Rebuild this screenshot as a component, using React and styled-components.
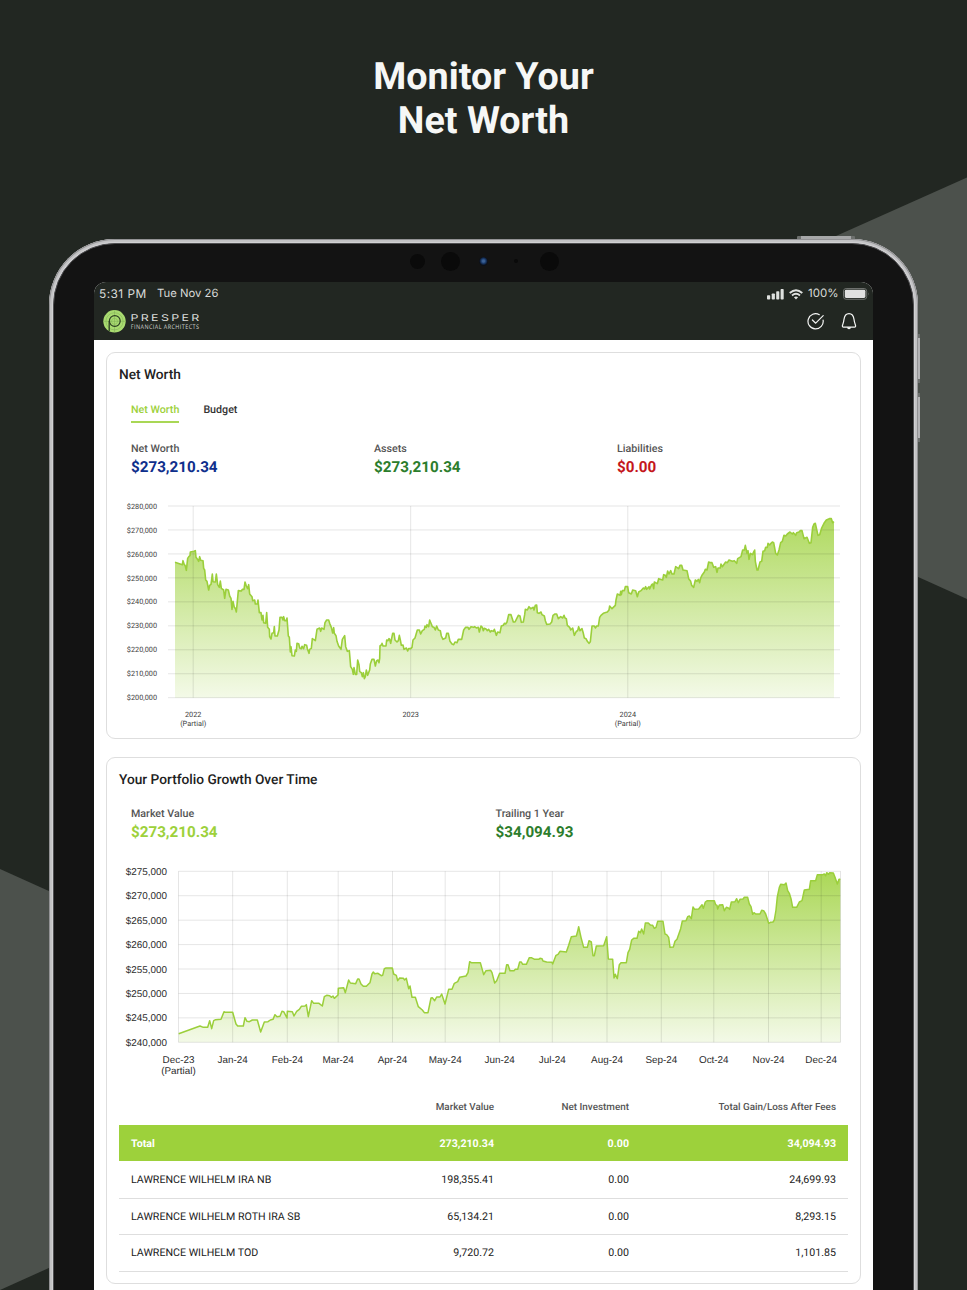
import styled, { createGlobalStyle, css } from 'styled-components';

const GREEN = '#9dd13b';

// Traces are sampled on a grid three times finer than the chart's own pixels.
const netWorthTrace = [
  {
    dx: 0,
    points:
      '195,217 217,224 219,212 222,222 226,228 229,241 233,205 237,199 240,197 241,186 252,184 256,182 258,202 264,210 266,214 269,200 272,211 279,212 281,235 284,240 287,270 291,274 293,285 296,300 299,286 303,283 307,252 309,275 316,276 319,252 323,284 328,292 331,273 334,295 341,300 344,325 348,298 355,300 359,318 363,325 366,358 369,334 373,352 376,355 379,366 385,302 394,303 397,298 402,298 405,276 409,288 413,296 416,284 419,312 426,320 428,332 434,330 436,342 442,342 444,330 448,368 453,368 456,390 459,376 461,398 467,400 470,368 473,412 478,418 479,440 483,447 486,430 491,428 493,410 495,438 502,438 507,420 510,382 516,382 519,390 521,380 524,392 529,392 531,384 535,438 538,442 541,486 543,470 546,497 553,498 556,480 559,484 561,460 566,461 569,474 574,476 576,469 581,476 584,464 590,466 592,476 597,490 599,478 604,475 607,446 616,452 621,418 629,414 632,424 635,414 642,418 645,398 650,390 656,390 659,400 664,412 668,429 671,413 673,430 678,437 681,454 686,468 693,478 697,448 702,440 704,437 707,470 712,484 718,482 722,530 727,538 730,553 732,533 736,553 740,553 743,510 747,524 749,545 754,548 757,560 760,548 763,566 766,560 769,540 773,556',
  },
  {
    dx: 750,
    points:
      '27,545 29,540 31,522 36,508 42,508 46,528 50,512 54,510 57,518 59,505 60,468 65,464 66,460 69,468 78,468 80,450 84,452 87,446 89,448 92,460 98,430 102,430 105,450 111,456 115,452 118,436 121,450 124,466 129,465 132,478 139,474 143,483 146,476 152,476 156,472 159,450 165,444 172,420 178,420 182,432 187,422 193,418 195,408 199,412 201,404 206,410 209,390 212,398 214,402 217,410 222,412 226,420 230,408 235,420 241,422 244,438 249,448 257,444 260,430 265,430 270,454 276,462 281,464 285,456 291,458 295,448 305,448 311,420 317,412 324,412 327,418 333,410 341,412 344,410 349,414 355,412 358,426 363,408 367,412 370,422 373,415 379,418 382,422 386,418 391,426 394,422 400,424 403,418 409,436 413,426 420,428 424,408 430,406 433,400 437,402 441,396 446,374 453,374 460,396 465,396 469,388 475,376 480,378 484,397 490,396 494,374 496,358 502,360 507,350 512,356 520,352 522,360 526,346 530,345 532,368 537,370 543,366 546,374 553,378 556,392 560,403 570,402 575,396 579,376 585,372 590,372 595,386 602,380 608,384 612,376 615,384 619,386 622,406 629,412 632,420 638,414 643,436 649,424 653,422 656,410 660,422 666,416 670,430 673,444 678,446 682,454 687,460 691,455 696,408 703,408 706,414 710,408 715,408 719,382',
  },
  {
    dx: 1470,
    points:
      '3,376 10,370 22,366 27,360 29,348 36,356 46,346 48,330 52,312 60,316 62,304 64,314 67,302 73,302 76,290 83,290 86,308 94,312 98,300 107,302 112,320 116,306 123,302 130,294 134,297 137,290 140,298 147,290 149,297 155,284 158,282 161,296 163,276 172,281 176,266 188,270 191,254 196,256 199,262 203,243 207,252 212,242 216,252 222,252 227,230 236,236 240,226 245,226 249,240 261,242 266,266 272,274 275,286 281,292 286,270 291,274 295,268 299,278 302,264 307,254 313,246 316,238 321,240 326,216 332,218 336,218 341,232 347,230 351,247 354,234 361,234 363,222 367,230 377,216 382,218 387,210 397,214 403,212 410,220 413,206 423,200 428,180 433,180 436,166 441,190 444,182 447,208 451,190 458,194 460,188 464,180 466,214 471,240 474,240 480,216 485,214 489,184 494,182 497,172 502,172 504,160 509,165 513,160 517,156 521,158 527,190 532,195 537,180 542,158 547,154 552,136 557,138 562,132 570,126 577,132 580,128 587,136 590,128 597,126 601,122 606,122 612,146 621,142 628,160 633,158 638,112 642,102 646,100 650,118 654,136 659,134 665,114 672,100 679,90 688,86 694,86 698,98 702,95',
  },
];

const portfolioTrace = [
  {
    dx: 0,
    points:
      '206,521 270,498 280,502 293,502 299,482 305,506 311,482 317,479 333,478 342,455 347,457 368,457 378,492 383,498 400,498 405,473 411,484 418,485 427,480 442,480 452,516 463,486 474,485 481,480 489,478 495,464 501,470 510,469 516,454 521,455 531,474 532,454 547,455 552,468 560,454 568,448 574,439 585,438 589,434 595,470 605,422 611,430 627,430 637,438 643,410 650,406 659,407 664,412 669,408 673,415 684,405 685,385 701,383 706,398 716,360 721,369 737,371 743,357 747,357 753,372 760,379 769,379 778,370',
  },
  {
    dx: 750,
    points:
      '30,368 36,342 40,336 44,341 54,340 64,347 68,346 73,326 78,324 97,324 101,342 109,346 113,362 119,354 130,355 134,360 139,355 146,386 150,378 156,412 166,412 175,440 187,450 193,458 204,458 213,414 217,413 224,422 230,411 240,411 245,402 255,432 266,388 276,388 283,370 293,365 299,352 318,348 324,338 329,305 334,308 361,308 371,344 378,332 392,331 396,338 404,369 410,362 419,340 435,340 440,314 444,314 450,332 462,332 466,328 473,328 479,306 484,306 488,313 499,313 508,293 514,293 524,298 536,298 540,295 546,296 549,303 560,306 576,307 578,312 588,286 594,283 600,274 619,276 626,256 634,230 649,228 653,214 656,200 663,232 671,262 682,262 687,242 694,246 699,287 703,287 709,258 731,257',
  },
  {
    dx: 1470,
    points:
      '20,230 25,297 38,298 42,354 46,343 52,356 58,314 63,308 79,308 84,278 89,268 95,240 101,235 111,235 116,214 121,218 125,207 131,222 136,189 145,189 151,195 158,196 163,205 168,202 173,184 189,184 195,222 200,224 206,232 210,262 220,261 225,244 231,238 242,206 247,183 258,182 263,170 268,168 274,176 279,141 284,148 296,147 306,134 310,145 316,126 322,122 343,122 347,134 351,136 353,147 358,135 368,134 373,152 379,142 385,144 389,148 394,126 405,125 410,116 415,128 420,118 429,117 433,112 443,112 448,132 453,140 458,163 462,158 467,162 480,162 485,151 491,152 497,162 506,190 511,187 519,186 523,180 528,150 532,110 538,82 542,73 553,74 558,69 563,92 568,100 573,116 578,142 590,142 598,126 606,122 613,90 628,88 632,62 647,62 652,44 668,44 673,42 677,47 680,38 686,43 689,38 700,39 705,52 712,72 717,58 721,58',
  },
];

const netWorthAxis = {
  values: ['$280,000', '$270,000', '$260,000', '$250,000', '$240,000', '$230,000', '$220,000', '$210,000', '$200,000'],
  dates: [
    { x: 74.2, label: '2022', partial: true },
    { x: 291.7, label: '2023' },
    { x: 508.8, label: '2024', partial: true },
  ],
};

const portfolioAxis = {
  values: ['$275,000', '$270,000', '$265,000', '$260,000', '$255,000', '$250,000', '$245,000', '$240,000'],
  dates: [
    { x: 59.5, label: 'Dec-23', partial: true },
    { x: 113.7, label: 'Jan-24' },
    { x: 168.3, label: 'Feb-24' },
    { x: 219.2, label: 'Mar-24' },
    { x: 273.5, label: 'Apr-24' },
    { x: 326.2, label: 'May-24' },
    { x: 380.7, label: 'Jun-24' },
    { x: 433.3, label: 'Jul-24' },
    { x: 488, label: 'Aug-24' },
    { x: 542.3, label: 'Sep-24' },
    { x: 594.8, label: 'Oct-24' },
    { x: 649.5, label: 'Nov-24' },
    { x: 702.2, label: 'Dec-24' },
  ],
};

const accounts = [
  { name: 'LAWRENCE WILHELM IRA NB', value: '198,355.41', net: '0.00', gain: '24,699.93' },
  { name: 'LAWRENCE WILHELM ROTH IRA SB', value: '65,134.21', net: '0.00', gain: '8,293.15' },
  { name: 'LAWRENCE WILHELM TOD', value: '9,720.72', net: '0.00', gain: '1,101.85' },
];

const toPoints = (segments, offsetY) =>
  segments.flatMap(({ dx, points }) =>
    points.split(' ').map((pair) => {
      const [x, y] = pair.split(',').map(Number);
      return [(x + dx) / 3 - 9, y / 3 + offsetY];
    })
  );

const AreaChart = ({ id, trace, offsetY, axis, height, top, bottom, left, right, labelX, font, fontSize, dateY, lineGap, closed, ink, stroke }) => {
  const points = toPoints(trace, offsetY);
  const line = points.map(([x, y]) => `${x.toFixed(2)},${y.toFixed(2)}`).join(' ');
  const first = points[0][0];
  const last = points[points.length - 1][0];
  const step = (bottom - top) / (axis.values.length - 1);

  return (
    <ChartSvg width="729" height={height} viewBox={`0 0 729 ${height}`} $font={font} $size={fontSize} $ink={ink}>
      <defs>
        <linearGradient id={id} gradientUnits="userSpaceOnUse" x1="0" y1={top} x2="0" y2={bottom}>
          <stop offset="0" stopColor={GREEN} stopOpacity="0.86" />
          <stop offset="1" stopColor={GREEN} stopOpacity="0.12" />
        </linearGradient>
      </defs>
      <polygon points={`${first},${bottom} ${line} ${last},${bottom}`} fill={`url(#${id})`} />
      <g stroke="#000" strokeOpacity="0.1">
        {axis.values.map((v, i) => (
          <line key={v} x1={left} x2={right} y1={top + i * step} y2={top + i * step} />
        ))}
        {axis.dates.map(({ x }) => (
          <line key={x} x1={x} x2={x} y1={top} y2={bottom} />
        ))}
        {closed && <line x1={right} x2={right} y1={top} y2={bottom} />}
      </g>
      <polyline points={line} fill="none" stroke="#9bcf3b" strokeWidth={stroke} strokeLinejoin="round" />
      {axis.values.map((v, i) => (
        <text key={v} x={labelX} y={top + i * step + fontSize * 0.36} textAnchor="end">
          {v}
        </text>
      ))}
      {axis.dates.map(({ x, label, partial }) => (
        <text key={x} x={x} y={dateY} textAnchor="middle">
          {label}
          {partial && (
            <tspan x={x} dy={lineGap}>
              (Partial)
            </tspan>
          )}
        </text>
      ))}
    </ChartSvg>
  );
};

const Backdrop = () => (
  <BackdropSvg width="967" height="1290" viewBox="0 0 967 1290">
    <path d="M836 236 967 177.500V599L836 540Z" fill="#4c514c" />
    <path d="M0 869 131 928V1231L0 1290Z" fill="#4c514c" />
  </BackdropSvg>
);

const Logo = () => (
  <svg width="98" height="24" viewBox="0 0 98 24">
    <circle cx="11.500" cy="12.300" r="11.200" fill="#a9db70" />
    <g fill="none" stroke="#7cab55" strokeWidth="0.5">
      <circle cx="11.500" cy="12.300" r="8.600" />
      <path d="M0.500 12.300H22.500M11.500 1.300V23.300" />
      <circle cx="11.500" cy="12.300" r="3" />
    </g>
    <circle cx="11.800" cy="12" r="5.400" fill="none" stroke="#2c3f22" strokeWidth="1.200" />
    <path d="M6.200 12V22" stroke="#2c3f22" strokeWidth="1.300" />
    <text
      x="20.400"
      y="11.900"
      transform="scale(1.350 1)"
      fontFamily="Inter, sans-serif"
      fontSize="9.200"
      fontWeight="400"
      fill="#dcdedc"
      textLength="50.900"
      lengthAdjust="spacing"
    >
      PRESPER
    </text>
    <text
      x="31.600"
      y="19.600"
      transform="scale(0.880 1)"
      fontFamily="'Open Sans', sans-serif"
      fontSize="6.200"
      fill="#d3d6d3"
      textLength="77.500"
      lengthAdjust="spacing"
    >
      FINANCIAL ARCHITECTS
    </text>
  </svg>
);

const SignalIcon = () => (
  <svg width="17" height="12" viewBox="0 0 17 12" fill="#dfe1df">
    <rect x="0" y="7.300" width="3.200" height="4.200" rx="0.800" />
    <rect x="4.700" y="5.400" width="3.200" height="6.100" rx="0.800" />
    <rect x="9.200" y="3.200" width="3.100" height="8.300" rx="0.800" />
    <rect x="13.600" y="0.900" width="3.100" height="10.600" rx="0.800" />
  </svg>
);

const WifiIcon = () => (
  <svg width="14" height="11" viewBox="0 0 14 11" fill="none" stroke="#dfe1df" strokeWidth="1.800">
    <path d="M0.700 4Q7 -1.600 13.300 4" />
    <path d="M3 6.500Q7 3 11 6.500" />
    <path d="M4.900 8.300Q7 6.600 9.100 8.300L7 10.500Z" fill="#dfe1df" stroke="none" />
  </svg>
);

const BatteryIcon = () => (
  <svg width="27" height="12" viewBox="0 0 27 12">
    <rect x="0.500" y="0.500" width="23.200" height="10.800" rx="2.600" fill="none" stroke="#6d706d" />
    <rect x="1.800" y="1.800" width="20.600" height="8.200" rx="1.400" fill="#e0e0e0" />
    <path d="M25 4.200q1.300 1.700 0 3.400z" fill="#6d706d" />
  </svg>
);

const TaskIcon = () => (
  <svg width="18" height="18" viewBox="0 0 18 18" fill="none" stroke="#f4f5f4" strokeWidth="1.200" strokeLinecap="round" strokeLinejoin="round">
    <path d="M12.300 2.700A7.600 7.600 0 1 0 16.100 8.100" />
    <path d="M5.400 8 8.700 11.200 16.200 3.700" />
  </svg>
);

const BellIcon = () => (
  <svg width="16" height="18" viewBox="0 0 16 18">
    <path
      d="M8 1.700C5 1.700 3.400 4.400 3 7.400C2.700 10 2.300 11.200 1.600 12.900C1.100 14.100 1.400 15.100 2.600 15.100H13.400C14.600 15.100 14.900 14.100 14.400 12.900C13.700 11.200 13.300 10 13 7.400C12.600 4.400 11 1.700 8 1.700Z"
      fill="none"
      stroke="#f4f5f4"
      strokeWidth="1.200"
      strokeLinejoin="round"
    />
    <path d="M5.900 15.200H10.100Q9.700 17.300 8 17.300T5.900 15.200Z" fill="#f4f5f4" />
  </svg>
);

const StatItem = ({ label, value, color }) => (
  <Stat>
    <StatLabel>{label}</StatLabel>
    <StatValue $color={color}>{value}</StatValue>
  </Stat>
);

const App = () => {
  return (
    <Page>
      <GlobalStyle />
      <Backdrop />
      <Headline>
        Monitor Your
        <br />
        Net Worth
      </Headline>
      <Device>
        <PowerButton />
        <VolumeButton $top={95} />
        <VolumeButton $top={154} />
        <Bezel>
          <CameraBar>
            <Sensor $size={15} $gap={16} />
            <Sensor $size={19} $gap={19} />
            <Lens />
            <Sensor $size={4} $gap={22} />
            <Sensor $size={19} />
          </CameraBar>
          <Screen>
            <StatusBar>
              <Clock>5:31 PM</Clock>
              <Today>Tue Nov 26</Today>
              <SignalIcon />
              <WifiIcon />
              <Charge>100%</Charge>
              <BatteryIcon />
            </StatusBar>
            <AppBar>
              <Logo />
              <AppActions>
                <TaskIcon />
                <BellIcon />
              </AppActions>
            </AppBar>
            <Content>
              <Card $height={387}>
                <CardTitle>Net Worth</CardTitle>
                <Tabs>
                  <Tab $active>Net Worth</Tab>
                  <Tab>Budget</Tab>
                </Tabs>
                <Stats $columns={3} $top={18}>
                  <StatItem label="Net Worth" value="$273,210.34" color="#0f2f8c" />
                  <StatItem label="Assets" value="$273,210.34" color="#2c7d2c" />
                  <StatItem label="Liabilities" value="$0.00" color="#c4161c" />
                </Stats>
                <AreaChart
                  id="net-worth-fill"
                  trace={netWorthTrace}
                  offsetY={-6}
                  axis={netWorthAxis}
                  height={236}
                  top={10}
                  bottom={201.7}
                  left={49}
                  right={721}
                  labelX={38}
                  font="Roboto"
                  fontSize={7.3}
                  dateY={220.7}
                  lineGap={9.2}
                  ink="#3c3c3c"
                  stroke={1.6}
                />
              </Card>
              <Card $height={527}>
                <CardTitle>Your Portfolio Growth Over Time</CardTitle>
                <Stats $columns={2} $top={16}>
                  <StatItem label="Market Value" value="$273,210.34" color={GREEN} />
                  <StatItem label="Trailing 1 Year" value="$34,094.93" color="#2c7d2c" />
                </Stats>
                <AreaChart
                  id="portfolio-fill"
                  trace={portfolioTrace}
                  offsetY={-1}
                  axis={portfolioAxis}
                  height={227}
                  top={10.3}
                  bottom={181.3}
                  left={59.5}
                  right={721.5}
                  labelX={48}
                  font="Liberation Sans"
                  fontSize={9.9}
                  dateY={201.7}
                  lineGap={11.7}
                  closed
                  ink="#2c2c2c"
                  stroke={1.5}
                />
                <Table>
                  <thead>
                    <HeadRow>
                      <th aria-label="Account" />
                      <th>Market Value</th>
                      <th>Net Investment</th>
                      <th>Total Gain/Loss After Fees</th>
                    </HeadRow>
                  </thead>
                  <tbody>
                    <TotalRow>
                      <td>Total</td>
                      <td>273,210.34</td>
                      <td>0.00</td>
                      <td>34,094.93</td>
                    </TotalRow>
                    {accounts.map((account) => (
                      <AccountRow key={account.name}>
                        <td>{account.name}</td>
                        <td>{account.value}</td>
                        <td>{account.net}</td>
                        <td>{account.gain}</td>
                      </AccountRow>
                    ))}
                  </tbody>
                </Table>
              </Card>
            </Content>
          </Screen>
        </Bezel>
      </Device>
    </Page>
  );
};

const GlobalStyle = createGlobalStyle`
  * {
    box-sizing: border-box;
  }

  body {
    margin: 0;
    background: #222722;
    font-family: Roboto, "Noto Sans", sans-serif;
    color: #212121;
    text-rendering: geometricPrecision;
  }
`;

const Page = styled.main`
  position: relative;
  width: 967px;
  height: 1290px;
  overflow: hidden;
  background: #222722;
`;

const BackdropSvg = styled.svg`
  position: absolute;
  inset: 0;
`;

const Headline = styled.h1`
  position: relative;
  height: 239px;
  margin: 0;
  padding-top: 55px;
  font-size: 37.7px;
  font-weight: 700;
  line-height: 44px;
  text-align: center;
  color: #f6f7f6;
`;

const Device = styled.div`
  position: relative;
  width: 869px;
  height: 1120px;
  margin-left: 49px;
  padding: 4px;
  border-radius: 66px;
  background: #d3d3d5;
  box-shadow: inset 0 0 0 1px #929294, inset 0 0 1px 3px #c2c2c4;
`;

const PowerButton = styled.span`
  position: absolute;
  top: -3px;
  right: 63px;
  width: 58px;
  height: 3px;
  border: solid #6d706e;
  border-width: 0 4px;
  border-radius: 1px 1px 0 0;
  background: #a6a7a8;
`;

const VolumeButton = styled.span`
  position: absolute;
  top: ${({ $top }) => $top}px;
  right: -2px;
  width: 2px;
  height: 49px;
  border: solid #6d706e;
  border-width: 4px 0;
  background: #b4b4b6;
`;

const Bezel = styled.div`
  height: 100%;
  padding: 0 40px;
  border: 1px solid #4e4e50;
  border-radius: 62px;
  background: #131313;
`;

const CameraBar = styled.div`
  display: flex;
  align-items: center;
  height: 38px;
  padding: 0 0 4px 316px;
`;

const Sensor = styled.span`
  width: ${({ $size }) => $size}px;
  height: ${({ $size }) => $size}px;
  margin-right: ${({ $gap = 0 }) => $gap}px;
  border-radius: 50%;
  background: #0a0a0a;
`;

const Lens = styled.span`
  width: 9px;
  height: 9px;
  margin-right: 26px;
  border-radius: 50%;
  background: radial-gradient(circle at 50% 45%, #3c6296 0 1px, #193969 2.500px, #0b0f18 4.200px);
`;

const Screen = styled.div`
  width: 779px;
  height: 1020px;
  overflow: hidden;
  border-radius: 12px 12px 0 0;
  background: #fff;
`;

const StatusBar = styled.div`
  display: flex;
  align-items: center;
  height: 22px;
  padding: 0 3px 0 5px;
  background: #222722;
  font-family: Inter, "Liberation Sans", sans-serif;
  font-size: 11.5px;
  line-height: 22px;
  color: #d9dbd9;

  svg {
    flex: none;
    margin-top: 2px;
  }

  svg + svg {
    margin-left: 5px;
  }
`;

const Clock = styled.span`
  width: 58px;
  padding-top: 1px;
  font-size: 11.9px;
  letter-spacing: 0.45px;
`;

const Today = styled.span`
  flex: 1;
  margin-top: -1px;
  font-size: 11.3px;
`;

const Charge = styled.span`
  width: 30px;
  margin: 0 5px;
`;

const AppBar = styled.header`
  display: flex;
  align-items: flex-start;
  justify-content: space-between;
  height: 36px;
  padding: 5px 16px 0 9px;
  background: #222722;
`;

const AppActions = styled.div`
  display: flex;
  gap: 16px;
  padding-top: 3px;
`;

const Content = styled.div`
  display: flex;
  flex-direction: column;
  gap: 18px;
  padding: 12px;
`;

const Card = styled.section`
  height: ${({ $height }) => $height}px;
  padding: 12px 12px 0;
  border: 1px solid #dedede;
  border-radius: 9px;
`;

const CardTitle = styled.h2`
  margin: 0;
  font-size: 13.7px;
  font-weight: 500;
  line-height: 20px;
`;

const Tabs = styled.div`
  display: flex;
  gap: 24px;
  height: 38px;
  padding: 17px 12px 0;
`;

const Tab = styled.span`
  height: 21px;
  border-bottom: 2px solid transparent;
  font-size: 10.7px;
  font-weight: 500;
  line-height: 15px;
  color: #333;

  ${({ $active }) =>
    $active &&
    css`
      border-color: #a9d755;
      color: ${GREEN};
    `}
`;

const Stats = styled.div`
  display: grid;
  grid-template-columns: repeat(${({ $columns }) => $columns}, 1fr);
  height: ${({ $top }) => $top + 55}px;
  padding-top: ${({ $top }) => $top}px;
`;

const Stat = styled.div`
  padding-left: 12px;
`;

const StatLabel = styled.div`
  font-size: 10.7px;
  font-weight: 500;
  line-height: 15px;
  color: #555;
`;

const StatValue = styled.div`
  font-size: 15.2px;
  font-weight: 700;
  line-height: 23px;
  color: ${({ $color }) => $color};
`;

const ChartSvg = styled.svg`
  display: block;
  font-family: ${({ $font }) => `"${$font}"`}, sans-serif;
  font-size: ${({ $size }) => $size}px;
  fill: ${({ $ink }) => $ink};
`;

const Table = styled.table`
  width: 729px;
  border-collapse: collapse;
  table-layout: fixed;
  font-size: 10.65px;

  th,
  td {
    padding: 0 12px;
    text-align: right;
    white-space: nowrap;
  }

  th:nth-child(1),
  td:nth-child(1) {
    width: 252px;
    text-align: left;
  }

  th:nth-child(2),
  td:nth-child(2) {
    width: 135px;
  }

  th:nth-child(3),
  td:nth-child(3) {
    width: 135px;
  }
`;

const HeadRow = styled.tr`
  height: 37px;
  font-size: 9.9px;
  color: #555;

  th {
    padding-top: 1px;
    font-weight: 500;
  }
`;

const TotalRow = styled.tr`
  height: 36px;
  background: ${GREEN};
  font-weight: 700;
  color: #fff;
`;

const AccountRow = styled.tr`
  height: 36.6px;

  &:nth-child(2) {
    height: 37px;
  }

  td {
    border-bottom: 1px solid #dedede;
  }
`;

export default App;
